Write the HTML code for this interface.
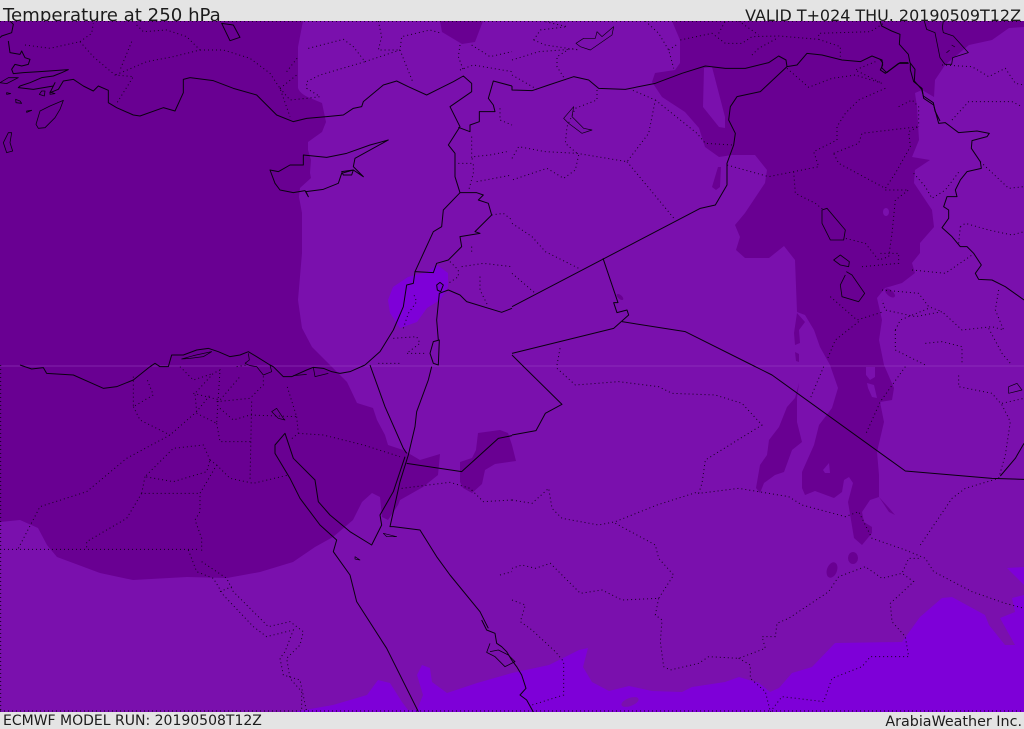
<!DOCTYPE html>
<html><head><meta charset="utf-8"><style>
html,body{margin:0;padding:0;background:#e4e4e4}
#w{position:relative;width:1024px;height:729px;overflow:hidden;background:#e4e4e4;font-family:"DejaVu Sans",sans-serif;color:#1c1c1c}
.t{position:absolute;white-space:nowrap;line-height:1}
svg{position:absolute;left:0;top:21px}
</style></head><body><div id="w">
<div class="t" style="left:3px;top:7px;font-size:18.15px">Temperature at 250 hPa</div>
<div class="t" style="right:3px;top:8px;font-size:15.95px">VALID T+024 THU. 20190509T12Z</div>
<div class="t" style="left:3px;top:714px;font-size:14px">ECMWF MODEL RUN: 20190508T12Z</div>
<div class="t" style="right:2px;top:715px;font-size:14.3px">ArabiaWeather Inc.</div>
<svg width="1024" height="691" viewBox="0 21 1024 691">
<rect x="0" y="21" width="1024" height="691" fill="#7a10ad"/>
<g fill="#690092">
<path d="M0 21H303L298 47L298 88Q300 94 310 98L322 103L326 122L322 132L308 142L308 150L311 160L310 173L311 178L300 188L299 197L302 213L302 253L298 300L302 328L312 347L330 365L347 382L357 403L373 408L377 420L385 435L388 445L403 450L420 460L440 454L438 475L423 487L400 500L398 505L388 520L382 517L380 497L372 493L362 502L353 520L333 537L315 547L293 562L260 572L227 578L187 577L133 580L100 573L57 557L47 545L38 528L20 520L0 522Z"/>
<path d="M672 21L680 40L680 63L675 70L655 73L652 82L662 97L685 112L699 128L705 147L719 157L732 155L755 155L767 170L765 183L745 213L735 225L740 237L736 250L745 258L769 258L784 246L795 260L797 312L805 315L814 330L820 347L830 365L838 388L832 408L819 425L814 445L802 472L802 488L805 495L815 491L834 498L842 492L844 480L849 477L853 483L848 502L854 538L862 545L872 533L872 527L864 522L862 512L870 500L879 497L889 508L895 515L889 512L879 497L879 475L877 452L884 422L880 402L892 400L894 388L884 365L879 340L882 320L877 298L885 288L902 283L915 273L912 263L920 253L920 243L934 227L932 210L914 183L915 170L930 160L912 157L919 140L917 107L915 93L922 90L934 97L935 80L945 65L969 45L992 40L1009 28L1024 27V21Z"/>
<path d="M440 21L442 32L462 44L475 42L483 21Z"/>
<path d="M478 433L500 430L508 433L512 445L516 461L495 464L485 470L482 484L472 493L463 488L460 482L460 462L472 458L476 450Z"/>
<path d="M799 383L795 398L787 407L779 427L769 440L767 455L760 465L756 488L760 493L764 483L775 475L784 472L792 450L802 442L797 422L797 398Z"/>
<path d="M797 313L805 322L799 330L800 343L795 345L794 333Z"/>
<path d="M795 352L799 354L799 362L796 361Z"/>
<path d="M712 187L718 167L721 167L720 187L716 190Z"/>
<ellipse cx="853" cy="558" rx="5" ry="6"/>
<ellipse cx="832" cy="570" rx="5" ry="8" transform="rotate(20 832 570)"/>
<ellipse cx="620" cy="297" rx="4" ry="2" transform="rotate(40 620 297)"/>
<ellipse cx="890" cy="293" rx="6" ry="3" transform="rotate(40 890 293)"/>
</g>
<g fill="#7a10ad">
<path d="M704 68L712 67L725 117L725 128L719 127L703 107Z"/>
<path d="M866 367L875 367L875 377L870 380L866 375Z"/>
<path d="M867 383L874 385L877 398L872 397L868 388Z"/>
<path d="M823 470L829 463L830 473L825 473Z"/>
<ellipse cx="886" cy="212" rx="3" ry="4"/>
</g>
<g fill="#7e00d8">
<path d="M293 712L333 705L367 695L378 680L390 683L402 702L408 710L417 710L423 695L417 675L422 665L430 668L432 682L447 693L477 683L512 673L549 665L579 650L588 648L583 667L592 682L609 691L629 686L652 691L682 692L692 687L725 682L739 677L759 683L770 692L779 688L792 673L812 667L835 643L902 642L920 617L942 598L952 597L985 615L989 625L1005 645L1015 645L1000 618L1015 612L1012 598L1024 595V712Z"/>
<path d="M1007 568L1024 585V567Z"/>
<path d="M388 300L393 287L408 277L427 272L437 265L448 273L448 287L440 300L427 308L417 322L400 328L390 313Z"/>
</g>
<ellipse cx="630" cy="702" rx="9" ry="4" transform="rotate(-20 630 702)" fill="#7a10ad"/>
<rect x="0" y="365.5" width="1024" height="1" fill="#a050c8" opacity=".45"/>

<!-- dotted boundaries -->
<g fill="none" stroke="#15001f" stroke-width="3" stroke-dasharray="3 9">
<g transform="scale(.33333)">
<path d="M75 135L150 145L240 125L280 170L345 225L400 230L350 310M240 125L275 100L280 70M410 75L430 95L500 90L560 110L600 150L520 170L440 185L370 215L345 225M600 150L670 150L750 175L810 220L840 265L870 350M395 125L360 210M840 265L890 225M860 215L895 170M925 145L1030 118L1060 140L1095 185L960 225L920 245L920 265L960 290M840 265L870 300L920 295L960 290M1095 185L1200 150L1205 110L1290 90L1325 100M1135 63L1145 110L1135 150L1200 150M1200 150L1240 250M1380 135L1375 170L1390 210M1380 210L1420 195L1536 215M1415 135L1470 170L1536 155M1415 410L1415 480L1420 470L1470 465L1520 455M1375 490L1420 490L1420 520L1405 575M1430 545L1536 525M1475 645L1510 640L1536 660M1500 325L1500 360L1536 375M1415 740L1415 760M1385 800L1450 790L1536 800M1440 830L1440 870L1465 920M1350 785L1375 810L1375 830L1345 850M1210 985L1225 940L1250 905L1240 880M1180 1015L1250 1010L1260 1030L1220 1060L1280 1060M1135 1090L1200 1090M0 64H1536"/>
</g>
<g transform="translate(512 0) scale(.33333)">
<path d="M65 120L85 90L165 80L100 65M65 120L100 135L200 150L175 145L135 170L135 200L160 240M0 180L80 155L175 148M400 63L440 100L470 150L485 205M470 150L500 130M505 120L600 100L640 130L690 130L720 110L800 108L920 118L920 100L1075 95L1115 70M620 100L640 63M680 63L740 105M720 165L740 145L795 115M920 118L985 140L985 170M825 205L890 262L960 235L1030 225L1110 250L1030 210L1090 185M1120 265L1040 300L1000 340L975 380L975 420L905 455L920 500L845 515L770 530L645 495M845 515L850 580L910 610L935 630M965 460L1040 430L1050 400L1220 380L1190 395L1195 440L1150 520L1120 565L980 490L965 460M1160 320L1200 300L1220 320L1220 380M1120 570L1190 570L1150 600L1140 700L1130 770L1100 780L1060 730L1000 715M1200 810L1300 820L1380 765M1050 800L1160 790L1160 760L1100 760M1110 870L1220 880L1250 920L1290 935L1210 950L1120 930L1110 900M1320 360L1370 305L1500 305L1530 320M1290 195L1380 200L1430 230L1480 205L1510 250L1536 255M1405 485L1490 565L1536 560M1205 520L1240 560L1260 595L1300 570L1345 510M1345 680L1360 670L1430 690L1500 705L1536 695M1340 730L1345 680M1460 870L1450 930L1475 990L1440 980L1350 990L1290 935M1150 990L1165 960L1250 925M1150 990L1150 1050L1240 1095M1240 1030L1290 1025L1350 1040L1350 1090M1430 985L1470 1060L1495 1090M955 890L1035 960L1115 935M1040 965L970 1020L945 1080M0 225L75 268M255 270L255 300L190 325L165 380L160 430L195 460M0 475L20 440L100 455L195 460L345 485L410 400L430 300L360 270M430 300L555 400L580 430L660 435M345 485L490 660M200 465L190 510L155 535L105 505L0 540M0 670L60 710L100 755L200 805M0 820L70 880M135 1095L145 1040M0 64H1536"/>
</g>
<g transform="translate(0 365) scale(.33333)">
<path d="M0 553L600 553M55 550L120 425L260 380L380 280L510 210L590 140L630 90M400 35L400 125L460 90L440 40M400 125L420 165L510 210M590 140L585 85L640 25L660 15L650 175L590 145M650 110L750 100L790 60L790 30M580 85L660 105L720 35M710 5L740 0M540 5L580 45L640 25M650 175L660 230L760 230M660 130L700 165L750 150L890 155L860 60M755 110L750 350M890 155L895 205L870 225M895 205L970 210L1090 240L1200 275M630 285L650 300L600 385L600 440L585 465L605 520L605 565M630 285L610 240L520 250L435 335L520 350L620 320L630 285M435 335L425 385L600 385M425 385L380 460L260 530L260 550M650 300L690 340L760 355L865 330M565 555L590 620L640 640L670 690L760 785L800 815L880 795L855 860L840 880L850 930L900 945L920 1040M605 590L680 640L700 680L780 760L805 785L870 770L910 800L900 840L860 880L870 940L905 980L905 1040M660 680L695 665M1205 370L1350 352L1410 370L1450 410L1536 405M1500 630L1536 620M2 0V1040M0 1038H1536"/>
</g>
<g transform="translate(512 365) scale(.33333)">
<path d="M135 10L190 60L320 50L440 65L480 85L610 90L690 115L750 180L580 285L570 355L560 385L680 370L830 395L870 420L1000 455L1040 440L1080 520L1180 555L1240 580L1265 620L1380 680L1480 715L1536 730M0 405L60 415L110 370L120 430L150 460L260 480L310 470L435 420L560 380M310 475L430 540L440 580L485 630L440 700L330 705L270 675L205 685L115 595L70 610L30 600L0 610M440 700L430 750L450 765L445 830L455 905L475 915L560 895L590 875L680 880L760 850L750 815L790 815L795 775L830 760L950 680L980 635L1060 605L1110 640L1170 625L1205 650L1135 715L1140 770L1180 815L1190 875L1075 875L1050 905L960 940L935 1010L810 995L775 1040M680 880L715 900L715 940L760 980L775 1040M0 705L40 720L25 770L60 795L130 860L155 890L155 990L60 1020M1225 540L1320 400L1360 370L1460 340L1480 270L1495 170L1470 120L1440 85L1340 65L1340 30M1220 580L1190 580L1170 625M1470 115L1536 100M1180 5L1105 110L1060 210M935 5L895 100M0 1038H1536"/>
</g>
</g>

<!-- solid coast and borders -->
<g fill="none" stroke="#0a0010" stroke-width="3" stroke-linejoin="round">
<g transform="translate(0 21) scale(.33333)">
<path d="M30 0L40 10L35 35L5 45L0 50M25 60L30 95L60 100L65 90L75 110L90 115L85 130L65 135L45 130L35 145L40 158L70 155L120 152L205 146L185 155L160 165L125 170L90 185L60 195L55 200L100 205L160 195L165 185L150 215L175 205L190 180L220 175L250 195L280 210L295 195L325 208L325 245L350 260L400 282L420 285L490 260L525 270L550 215L550 175L570 170"/>
<path d="M108 310L120 270L150 255L190 238L180 265L165 290L135 320L115 322ZM10 365L25 335L35 335L30 365L38 390L20 395ZM125 210L135 210L133 225L118 220ZM20 215L32 218L20 220ZM47 235L60 240L65 247L48 245ZM80 270L95 268L80 274ZM0 185L25 170L55 170L20 188ZM150 213L165 218L150 220Z" stroke-width="2.4"/>
</g>
<g transform="translate(150 335) scale(.33333)">
<path d="M0 95L15 85L30 95L55 95L65 60L75 60L100 60L140 45L175 40L205 50L240 65L270 60L295 50L320 65L360 90L370 95L400 125L425 125L470 105L490 97L520 100L545 110L570 115L600 110L645 90"/>
<path d="M95 72L130 62L185 50L160 65L120 70ZM285 85L300 92L320 95L340 120L365 110L360 90M295 55L298 75L285 85M490 97L495 125L535 115M430 122L470 118" stroke-width="2.2"/>
</g>
<g transform="translate(440 620) scale(.33333)">
<path d="M125 0L140 30L165 40L170 70L185 80L200 95L215 120L230 140L245 165L258 205L240 225L260 240L280 276"/>
<path d="M150 70L140 97L165 110L195 140L225 125L205 105L175 90L150 95" stroke-width="2.4"/>
</g>
<g transform="translate(880 21) scale(.33333)">
<path d="M0 0L5 15L35 30L60 40L58 70L85 100L90 125L105 145L103 180L125 205L130 225L160 245L165 270L180 300"/>
<path d="M133 0L140 25L165 35L180 110L195 130L215 130L218 110L265 95L220 45L190 35L187 20L190 0" stroke-width="2.4"/>
<path d="M0 115L8 125L5 140L20 155L60 125L85 125"/>
<path d="M200 95L208 88ZM215 72L225 78" stroke-width="2"/>
</g>
<g transform="scale(.33333)">
<path d="M570 233L640 242L700 265L770 285L830 345L880 365L920 355L980 350L1030 345L1060 325L1085 320L1090 305L1150 255L1190 243L1225 260L1280 285L1320 265L1360 245L1390 228L1415 250L1415 275L1350 320L1380 380L1345 435L1365 460L1365 530L1380 578L1430 578L1450 585L1435 600L1465 610L1475 645L1425 695L1440 700L1380 710L1385 740L1345 780L1310 790L1300 818L1245 815L1240 850L1220 855L1210 920L1180 990L1140 1055L1095 1095"/>
<path d="M1380 578L1330 630L1325 680L1300 695L1245 815"/>
<path d="M1375 382L1410 395L1410 375L1438 365L1438 335L1485 335L1480 315L1465 295L1480 243L1536 258"/>
<path d="M1536 925L1505 937L1400 905L1380 885L1345 870L1318 880L1310 960L1315 1020"/>
<path d="M1290 1060L1300 1025L1318 1020L1315 1095L1300 1090ZM1310 855L1320 847L1330 855L1322 875L1312 870Z"/>
<path d="M910 465L910 495L870 495L835 515L810 510L825 550L840 570L880 578L915 572L925 590L918 575L970 568L1015 550L1025 520L1060 510L1090 530L1060 500L1065 475L1165 420L1110 435L1040 460L980 472Z"/>
<path d="M1025 515L1060 510L1055 525L1030 525Z"/>
<path d="M665 70L700 75L720 112L690 122Z"/>
</g>
<g transform="translate(512 0) scale(.33333)">
<path d="M0 258L0 270L60 272L110 255L185 230L230 240L260 265L340 268L430 250L510 220L580 198L640 205L700 205L770 188L800 168L822 180L825 200L855 195L885 160L930 165L990 180L1045 185L1080 168L1110 180L1112 195L1105 210L1120 220L1160 190L1190 190"/>
<path d="M1195 190L1195 210L1205 245L1230 265L1235 295L1265 315L1280 370L1300 368L1340 398L1395 393L1432 400L1425 410L1380 422L1378 445L1405 485L1408 505L1365 515L1345 540L1330 570L1335 590L1305 590L1295 620L1310 630L1310 655L1290 683L1320 710L1345 740L1365 740L1385 760L1408 795L1390 820L1400 838L1440 840L1480 860L1536 900"/>
<path d="M825 200L745 275L675 290L655 320L650 360L670 400L665 435L645 490L645 555L610 615L565 625L0 920"/>
<path d="M0 1060L305 985L350 945L345 930L315 938L305 908L318 908L273 775M330 965L520 995L720 1095M0 1065L30 1095"/>
<path d="M930 630L945 625L1000 690L995 720L955 720L930 670ZM965 780L985 765L1012 785L1010 800L985 795ZM1000 825L985 855L990 890L1040 905L1058 880L1020 825L1003 815" stroke-width="2.5"/>
<path d="M192 130L215 115L250 115L255 95L270 110L305 80L300 105L235 150L205 140ZM155 355L185 320L180 350L215 385L240 390L210 400L170 370Z" stroke-width="2"/>
</g>
<g transform="translate(0 365) scale(.33333)">
<path d="M60 0L95 12L130 8L140 25L220 30L310 70L350 65L400 45L450 5"/>
<path d="M1295 5L1285 45L1250 140L1245 185L1225 270L1200 350L1170 485L1180 485L1260 495L1310 575L1350 630L1440 740L1465 790"/>
<path d="M1215 275L1180 380L1140 450L1145 480L1115 540L1050 500L990 450L955 410L945 345L880 280L855 205L825 240L825 265L870 340L900 400L960 480L1010 525L1000 560L1050 630L1070 710L1160 850L1225 980L1255 1040"/>
<path d="M1110 0L1155 125L1210 250L1220 265M1220 295L1385 320L1495 220L1536 212"/>
<path d="M815 140L830 130L850 160L855 165L835 160ZM1150 505L1190 515L1160 515ZM1065 575L1080 585L1065 582Z" stroke-width="2"/>
</g>
<g transform="translate(512 365) scale(.33333)">
<path d="M0 210L72 197L100 145L150 118L30 0M720 0L780 30L1180 318L1440 340L1536 343M1465 333L1510 280L1536 235"/>
<path d="M1490 65L1515 55L1530 75L1490 85Z" stroke-width="2"/>
</g>
</g>
</svg>
</div></body></html>
